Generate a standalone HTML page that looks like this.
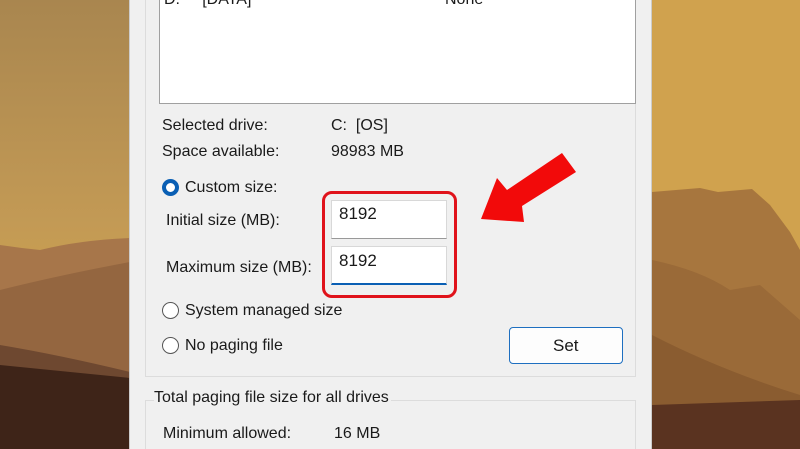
<!DOCTYPE html>
<html><head><style>
html,body{margin:0;width:800px;height:449px;overflow:hidden}
body{position:relative;font-family:"Liberation Sans",sans-serif;background:#b08848}
.t{position:absolute;font-size:16px;color:#1a1a1a;white-space:nowrap;line-height:18px}
.box{position:absolute;box-sizing:border-box}
.rad{position:absolute;width:17px;height:17px;border:1px solid #555;border-radius:50%;box-sizing:border-box;background:#fff}
</style></head><body>
<svg width="800" height="449" style="position:absolute;left:0;top:0">
<defs>
<linearGradient id="sk" x1="0" y1="0" x2="0" y2="1"><stop offset="0" stop-color="#a9864f"/><stop offset="0.5" stop-color="#c39a55"/><stop offset="0.6" stop-color="#c89e50"/></linearGradient>
</defs>
<rect width="800" height="449" fill="url(#sk)"/>
<rect x="640" width="160" height="449" fill="#d0a24e"/>
<path d="M0 245 Q20 248 40 250 Q80 240 130 238 L130 449 L0 449Z" fill="#a7764a"/>
<path d="M0 290 Q60 275 130 262 L130 449 L0 449Z" fill="#946640"/>
<path d="M0 345 Q60 355 130 372 L130 449 L0 449Z" fill="#6e4830"/>
<path d="M0 365 L130 378 L130 449 L0 449Z" fill="#3e2418"/>
<path d="M652 192 L700 188 L718 192 L752 189 L770 205 L790 232 L800 250 L800 449 L652 449Z" fill="#a7763e"/>
<path d="M652 260 Q700 270 730 290 L760 285 L800 320 L800 449 L652 449Z" fill="#9a6a38"/>
<path d="M652 335 Q720 370 800 395 L800 449 L652 449Z" fill="#8a5c30"/>
<path d="M652 405 L800 400 L800 449 L652 449Z" fill="#5a3320"/>
</svg>
<div class="box" style="left:129px;top:0;width:523px;height:449px;background:#f0f0f0;border-left:1px solid #ccc;border-right:1px solid #ccc"></div>
<div class="box" style="left:145px;top:0;width:491px;height:377px;border:1px solid #dcdcdc;border-top:none"></div>
<div class="box" style="left:159px;top:0;width:477px;height:104px;background:#fff;border:1px solid #a0a0a0;border-top:none"></div>
<div class="t" style="left:164px;top:-9px">D:&nbsp;&nbsp;&nbsp;&nbsp;&nbsp;[DATA]</div>
<div class="t" style="left:445px;top:-9px">None</div>
<div class="t" style="left:162px;top:117px">Selected drive:</div>
<div class="t" style="left:331px;top:117px">C:&nbsp; [OS]</div>
<div class="t" style="left:162px;top:143px">Space available:</div>
<div class="t" style="left:331px;top:143px">98983 MB</div>
<div class="rad" style="left:162px;top:179px;border:4.5px solid #0a5fb4"></div>
<div class="t" style="left:185px;top:179px">Custom size:</div>
<div class="t" style="left:166px;top:212px">Initial size (MB):</div>
<div class="t" style="left:166px;top:259px">Maximum size (MB):</div>
<div class="box" style="left:331px;top:200px;width:116px;height:39px;background:#fff;border:1px solid #d8d8d8;border-bottom:1px solid #999"></div>
<div class="t" style="left:339px;top:205px;font-size:17px">8192</div>
<div class="box" style="left:331px;top:246px;width:116px;height:39px;background:#fff;border:1px solid #d8d8d8;border-bottom:2px solid #0a5fb4"></div>
<div class="t" style="left:339px;top:252px;font-size:17px">8192</div>
<div class="box" style="left:322px;top:191px;width:135px;height:107px;border:3px solid #e0131b;border-radius:10px"></div>
<div class="rad" style="left:162px;top:302px"></div>
<div class="t" style="left:185px;top:302px">System managed size</div>
<div class="rad" style="left:162px;top:337px"></div>
<div class="t" style="left:185px;top:337px">No paging file</div>
<div class="box" style="left:509px;top:327px;width:114px;height:37px;background:#fdfdfd;border:1px solid #1e6fc0;border-radius:4px"></div>
<div class="t" style="left:553px;top:337px;font-size:17px">Set</div>
<div class="box" style="left:145px;top:400px;width:491px;height:49px;border:1px solid #dcdcdc;border-bottom:none"></div>
<div class="t" style="left:154px;top:389px;background:#f0f0f0;padding-right:2px">Total paging file size for all drives</div>
<div class="t" style="left:163px;top:425px">Minimum allowed:</div>
<div class="t" style="left:334px;top:425px">16 MB</div>
<svg width="800" height="449" style="position:absolute;left:0;top:0">
<polygon points="562,153 576,172 522,206 524,222 481,219 497,178 507,190" fill="#f20a0a"/>
</svg>
</body></html>
